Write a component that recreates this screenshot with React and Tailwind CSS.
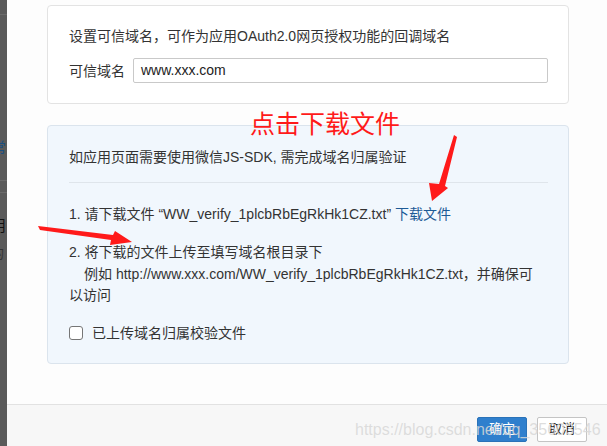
import React from "react";

const font = { fontFamily: '"Liberation Sans", "Noto Sans CJK SC", sans-serif' };

const Arrows = () => (
  <svg className="absolute left-0 top-0 pointer-events-none" width="607" height="446" viewBox="0 0 607 446">
    <polygon points="454,135 457,137 445,186 448,188 432,201 429,183 439,184" fill="#ff1a1a" />
    <polygon points="38,226 113,235 115,231 132,242 110,245 111,240 40,230" fill="#ff1a1a" />
  </svg>
);

const App = () => {
  return (
    <div className="relative flex w-[607px] h-[446px] overflow-hidden text-[#333] text-[14px]" style={font}>
      <div className="relative w-[7px] shrink-0 bg-[#5a5a5a] overflow-hidden">
        <div className="absolute left-0 top-[14px] w-full h-px bg-[#6a6a6a]" />
        <div className="absolute left-0 top-[180px] w-full h-px bg-[#6a6a6a]" />
        <div className="absolute left-0 top-[192px] w-full h-px bg-[#6a6a6a]" />
        <span className="absolute left-[-8px] top-[64px] text-[#3a3a3a] text-[14px]">”</span>
        <span className="absolute left-[-9px] top-[137px] text-[#1b4f80] text-[15px]">常</span>
        <span className="absolute left-[-9px] top-[215px] text-[#111] text-[15px]">用</span>
        <span className="absolute left-[-9px] top-[244px] text-[#333] text-[13px]">的</span>
      </div>

      <div className="flex-1 flex flex-col bg-[#fdfdfd]">
        <div className="pl-[40px] pr-[38px] pt-[5px] pb-[40px]">
          <div className="bg-white border border-[#e3e3e3] rounded-[4px] pt-[20px] pb-[20px] pl-[21px] pr-[20px]">
            <div className="leading-[20px] whitespace-nowrap">设置可信域名，可作为应用OAuth2.0网页授权功能的回调域名</div>
            <div className="flex items-center gap-[8px] mt-[12px]">
              <span className="leading-[20px] whitespace-nowrap">可信域名</span>
              <div className="flex-1 h-[25px] border border-[#c9c9c9] rounded-[2px] bg-white flex items-center px-[7px] text-[#222]">
                www.xxx.com
              </div>
            </div>
          </div>

          <div className="mt-[21px] bg-[#f1f7fd] border border-[#dbe4ed] rounded-[4px] pt-[21px] pb-[20px] pl-[21px] pr-[20px]">
            <div className="leading-[20px] whitespace-nowrap">如应用页面需要使用微信JS-SDK, 需完成域名归属验证</div>
            <div className="h-px bg-[#dfe5eb] mt-[15px]" />
            <div className="mt-[21px] leading-[20px] whitespace-nowrap">
              1. 请下载文件 “WW_verify_1plcbRbEgRkHk1CZ.txt” <span className="text-[#1d5a96]">下载文件</span>
            </div>
            <div className="mt-[18px] leading-[21.5px] whitespace-nowrap">
              <div>2. 将下载的文件上传至填写域名根目录下</div>
              <div className="pl-[15px]">例如 http://www.xxx.com/WW_verify_1plcbRbEgRkHk1CZ.txt，并确保可</div>
              <div>以访问</div>
            </div>
            <div className="mt-[16px] flex items-center gap-[9px] leading-[20px]">
              <span className="w-[14px] h-[14px] border border-[#767676] rounded-[3px] bg-white" />
              <span>已上传域名归属校验文件</span>
            </div>
          </div>
        </div>

        <div className="flex-1 border-t border-[#e2e2e2] bg-[#f7f7f7] flex justify-end items-start gap-[10px] pt-[12px] pr-[20px]">
          <button className="w-[50px] h-[25px] bg-[#2f7fcd] border border-[#2a72b8] rounded-[2px] text-white text-[13px]">确定</button>
          <button className="w-[50px] h-[25px] bg-white border border-[#c4c4c4] rounded-[2px] text-[#222] text-[13px]">取消</button>
        </div>
      </div>

      <div className="absolute left-[250px] top-[109px] text-[25px] leading-[30px] text-[#ff1a1a] whitespace-nowrap pointer-events-none">点击下载文件</div>
      <div className="absolute left-[355px] top-[419px] text-[16px] leading-[22px] text-[rgba(215,215,215,0.85)] whitespace-nowrap pointer-events-none">https://blog.csdn.net/qq_35603546</div>
      <Arrows />
    </div>
  );
};

export default App;
